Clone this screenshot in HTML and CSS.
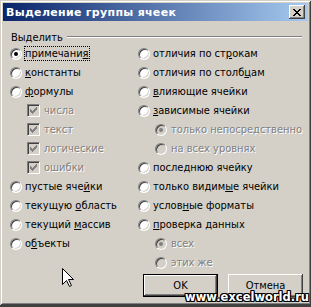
FILE: index.html
```html
<!DOCTYPE html>
<html lang="ru">
<head>
  <meta charset="UTF-8">
  <title>Выделение группы ячеек</title>
  <link rel="stylesheet" href="styles.css">
</head>
<body>
  <div class="window">
    <div class="titlebar">
      <span class="title">Выделение группы ячеек</span>
      <span class="close">
        <svg width="8" height="7" viewBox="0 0 8 7" shape-rendering="crispEdges">
          <path fill="#000" d="M0 0h2v1h-2z M6 0h2v1h-2z M1 1h2v1h-2z M5 1h2v1h-2z M2 2h4v1h-4z M3 3h2v1h-2z M2 4h4v1h-4z M1 5h2v1h-2z M5 5h2v1h-2z M0 6h2v1h-2z M6 6h2v1h-2z"/>
        </svg>
      </span>
    </div>

    <div class="content">
      <div class="group-head">
        <span>Выделить</span>
        <span class="rule"></span>
      </div>

      <div class="columns">
        <div class="col col-left">
          <div class="opt"><span class="radio on"></span><span class="caption focus">примечани<u>я</u></span></div>
          <div class="opt"><span class="radio"></span><span class="caption"><u>к</u>онстанты</span></div>
          <div class="opt"><span class="radio"></span><span class="caption"><u>ф</u>ормулы</span></div>
          <div class="sub">
            <div class="opt off"><span class="check"><svg width="7" height="7" viewBox="0 0 7 7" shape-rendering="crispEdges"><path d="M6 0h1v1h-1z M5 1h2v1h-2z M0 2h1v1h-1z M4 2h3v1h-3z M0 3h2v1h-2z M3 3h3v1h-3z M0 4h5v1h-5z M1 5h3v1h-3z M2 6h1v1h-1z"/></svg></span><span class="caption">числа</span></div>
            <div class="opt off"><span class="check"><svg width="7" height="7" viewBox="0 0 7 7" shape-rendering="crispEdges"><path d="M6 0h1v1h-1z M5 1h2v1h-2z M0 2h1v1h-1z M4 2h3v1h-3z M0 3h2v1h-2z M3 3h3v1h-3z M0 4h5v1h-5z M1 5h3v1h-3z M2 6h1v1h-1z"/></svg></span><span class="caption">текст</span></div>
            <div class="opt off"><span class="check"><svg width="7" height="7" viewBox="0 0 7 7" shape-rendering="crispEdges"><path d="M6 0h1v1h-1z M5 1h2v1h-2z M0 2h1v1h-1z M4 2h3v1h-3z M0 3h2v1h-2z M3 3h3v1h-3z M0 4h5v1h-5z M1 5h3v1h-3z M2 6h1v1h-1z"/></svg></span><span class="caption">логические</span></div>
            <div class="opt off"><span class="check"><svg width="7" height="7" viewBox="0 0 7 7" shape-rendering="crispEdges"><path d="M6 0h1v1h-1z M5 1h2v1h-2z M0 2h1v1h-1z M4 2h3v1h-3z M0 3h2v1h-2z M3 3h3v1h-3z M0 4h5v1h-5z M1 5h3v1h-3z M2 6h1v1h-1z"/></svg></span><span class="caption">ошибки</span></div>
          </div>
          <div class="opt"><span class="radio"></span><span class="caption">пустые яче<u>й</u>ки</span></div>
          <div class="opt"><span class="radio"></span><span class="caption">текущую <u>о</u>бласть</span></div>
          <div class="opt"><span class="radio"></span><span class="caption">текущий <u>м</u>ассив</span></div>
          <div class="opt"><span class="radio"></span><span class="caption">о<u>б</u>ъекты</span></div>
        </div>

        <div class="col col-right">
          <div class="opt"><span class="radio"></span><span class="caption">отличия по ст<u>р</u>окам</span></div>
          <div class="opt"><span class="radio"></span><span class="caption">отличия по столб<u>ц</u>ам</span></div>
          <div class="opt"><span class="radio"></span><span class="caption"><u>в</u>лияющие ячейки</span></div>
          <div class="opt"><span class="radio"></span><span class="caption"><u>з</u>ависимые ячейки</span></div>
          <div class="sub">
            <div class="opt off"><span class="radio on"></span><span class="caption">только непосредственно</span></div>
            <div class="opt off"><span class="radio"></span><span class="caption">на всех уровнях</span></div>
          </div>
          <div class="opt"><span class="radio"></span><span class="caption">после<u>д</u>нюю ячейку</span></div>
          <div class="opt"><span class="radio"></span><span class="caption">только видим<u>ы</u>е ячейки</span></div>
          <div class="opt"><span class="radio"></span><span class="caption">услов<u>н</u>ые форматы</span></div>
          <div class="opt"><span class="radio"></span><span class="caption"><u>п</u>роверка данных</span></div>
          <div class="sub">
            <div class="opt off"><span class="radio on"></span><span class="caption">всех</span></div>
            <div class="opt off"><span class="radio"></span><span class="caption">этих же</span></div>
          </div>

          <div class="buttons">
            <span class="btn default">OK</span>
            <span class="btn">Отмена</span>
          </div>
        </div>
      </div>
    </div>

    <svg class="cursor" width="13" height="20" viewBox="0 0 13 20">
      <polygon points="0.5,0.5 0.5,16.5 4.5,12.5 7.5,18.5 9.5,17.5 6.5,11.5 11.5,11.5" fill="#fff" stroke="#000" stroke-width="1"/>
    </svg>
    <div class="watermark">www.excelworld.ru</div>
  </div>
</body>
</html>
```

FILE: styles.css
```css
body {
  margin: 0;
  background: #404040;
  font-family: "DejaVu Sans Condensed", "DejaVu Sans", sans-serif;
  font-size: 11px;
  color: #000;
}
.window {
  position: relative;
  width: 311px;
  height: 305px;
  box-sizing: border-box;
  padding: 3px;
  background: #d4d0c8;
  box-shadow: inset 1px 1px #d4d0c8, inset -1px -1px #404040, inset 2px 2px #fff, inset -2px -2px #808080;
}
.titlebar {
  display: flex;
  align-items: center;
  justify-content: space-between;
  height: 18px;
  padding: 0 3px 0 3px;
  background: linear-gradient(to right, #0a246a, #a6caf0);
}
.title {
  color: #fff;
  font-family: "DejaVu Sans", sans-serif;
  font-weight: bold;
  font-size: 11px;
  letter-spacing: 0.3px;
}
.close {
  display: flex;
  align-items: center;
  justify-content: center;
  width: 16px;
  height: 14px;
  box-sizing: border-box;
  padding-right: 1px;
  background: #d4d0c8;
  box-shadow: inset -1px -1px #404040, inset 1px 1px #fff, inset -2px -2px #808080, inset 2px 2px #d4d0c8;
}
.content {
  padding: 9px 0 0 7px;
}
.group-head {
  display: flex;
  align-items: center;
  gap: 4px;
  height: 14px;
  padding-left: 1px;
}
.rule {
  flex: 1;
  height: 0;
  margin-right: 6px;
  border-top: 1px solid #808080;
  border-bottom: 1px solid #fff;
}
.columns {
  display: flex;
}
.col-left {
  width: 128px;
}
.col-right {
  flex: 1;
}
.opt {
  display: flex;
  align-items: center;
  gap: 2px;
  height: 19px;
}
.sub .opt {
  padding-left: 17px;
  gap: 3px;
}
.caption {
  border: 1px dotted transparent;
  line-height: 13px;
  white-space: nowrap;
}
.caption.focus {
  border-color: #000;
}
.caption u {
  text-underline-offset: 1px;
}
.off .caption {
  color: #808080;
  text-shadow: 1px 1px 0 #fff;
}
.radio {
  display: flex;
  align-items: center;
  justify-content: center;
  flex: none;
  width: 12px;
  height: 12px;
  box-sizing: border-box;
  border: 1px solid;
  border-color: #808080 #fff #fff #808080;
  border-radius: 50%;
  background: #fff;
  box-shadow: inset 1px 1px #404040, inset -1px -1px #d4d0c8;
}
.radio.on::after {
  content: "";
  width: 4px;
  height: 4px;
  border-radius: 50%;
  background: #000;
}
.off .radio {
  background: #d4d0c8;
}
.off .radio.on::after {
  background: #808080;
}
.check {
  display: flex;
  flex: none;
  width: 13px;
  height: 13px;
  box-sizing: border-box;
  padding: 2px;
  border: 1px solid;
  border-color: #808080 #fff #fff #808080;
  background: #d4d0c8;
  box-shadow: inset 1px 1px #404040, inset -1px -1px #d4d0c8;
}
.check path {
  fill: #808080;
}
.buttons {
  display: flex;
  gap: 10px;
  margin-top: 2px;
  padding-left: 5px;
}
.btn {
  display: flex;
  align-items: center;
  justify-content: center;
  width: 75px;
  height: 23px;
  box-sizing: border-box;
  background: #d4d0c8;
  box-shadow: inset -1px -1px #404040, inset 1px 1px #fff, inset -2px -2px #808080, inset 2px 2px #d4d0c8;
}
.btn.default {
  border: 1px solid #000;
}
.cursor {
  position: absolute;
  left: 62px;
  top: 268px;
}
.watermark {
  position: absolute;
  right: 2px;
  top: 290px;
  color: #fff;
  font-family: "DejaVu Sans", sans-serif;
  font-weight: bold;
  font-size: 11.5px;
  line-height: 14px;
  text-shadow: 1px 0 #000, -1px 0 #000, 0 1px #000, 0 -1px #000, 1px 1px #000, -1px -1px #000, 1px -1px #000, -1px 1px #000;
}
```
